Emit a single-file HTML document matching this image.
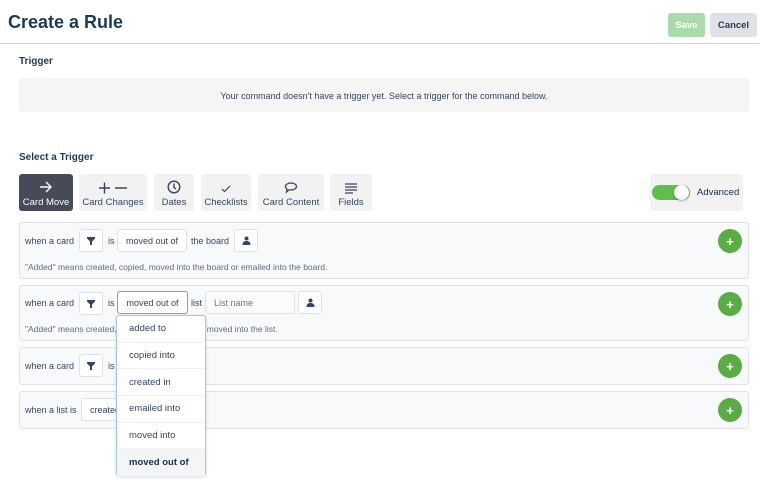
<!DOCTYPE html>
<html><head><meta charset="utf-8"><style>
*{box-sizing:border-box;margin:0;padding:0}
body{width:778px;height:484px;background:#fff;font-family:"Liberation Sans",sans-serif;color:#172b4d;position:relative;overflow:hidden}
.a{position:absolute}
h1{position:absolute;left:8px;top:12px;font-size:18px;font-weight:bold;color:#1d3a53}
.hr{left:0;top:43px;width:759px;height:1px;background:#d0d2d4}
.btn{top:13px;height:24px;border-radius:3px;font-size:9.5px;font-weight:bold;display:flex;align-items:center;justify-content:center}
.lbl{font-size:10px;font-weight:bold;color:#1d3a53}
.gbox{background:#f5f5f5;border-radius:3px}
.tab{top:174px;height:37px;background:#f2f2f2;border-radius:3px;font-size:9.5px;color:#344563;text-align:center}
.tab .ic{height:20px;display:flex;align-items:flex-end;justify-content:center}
.tab .t{margin-top:3px}
.row{left:19px;width:730px;background:#f8f9fa;border:1px solid #dfe1e6;border-radius:3px}
.tx{font-size:9px;color:#344563}
.f{position:absolute;height:23px;border:1px solid #dfe1e6;background:#fff;border-radius:3px;font-size:9px;color:#344563;display:flex;align-items:center;justify-content:center}
.plus{position:absolute;left:718px;width:24px;height:24px;border-radius:50%;background:#5aac44;color:#fff;font-weight:bold;font-size:13px;display:flex;align-items:center;justify-content:center}
.dd{left:116px;top:315px;width:90px;height:161px;background:#fff;border:1px solid #9ecbd8;border-radius:3px;box-shadow:0 1px 3px rgba(0,0,0,.15)}
.dd div{height:26.7px;border-bottom:1px solid #f0f0f0;font-size:9.5px;color:#344563;padding-left:12px;display:flex;align-items:center}
</style></head><body>
<h1>Create a Rule</h1>
<div class="a btn" style="left:668px;width:37px;background:#a9dbad;color:#fff">Save</div>
<div class="a btn" style="left:710px;width:47px;background:#dfe1e6;color:#1d3a53">Cancel</div>
<div class="a hr"></div>
<div class="a lbl" style="left:19px;top:56px">Trigger</div>
<div class="a gbox" style="left:19px;top:78px;width:730px;height:34px"></div>
<div class="a tx" style="left:19px;top:91px;width:730px;text-align:center">Your command doesn't have a trigger yet. Select a trigger for the command below.</div>
<div class="a lbl" style="left:19px;top:152px">Select a Trigger</div>

<div class="a tab" style="left:19px;width:54px;background:#464a59;color:#fff"><div class="ic"><svg width="14" height="14" viewBox="0 0 14 14" fill="none" stroke="#fff" stroke-width="1.4"><path d="M1 7h11M7 2l5 5-5 5"/></svg></div><div class="t">Card Move</div></div>
<div class="a tab" style="left:79px;width:68px"><div class="ic"><svg width="30" height="14" viewBox="0 0 30 14" fill="none" stroke="#344563" stroke-width="1.4"><path d="M1 8h11M6.5 2.5v11M17 8h12"/></svg></div><div class="t">Card Changes</div></div>
<div class="a tab" style="left:154px;width:40px"><div class="ic"><svg width="14" height="14" viewBox="0 0 14 14" fill="none" stroke="#344563" stroke-width="1.4"><circle cx="7" cy="7" r="5.8"/><path d="M7 3.5V7.5l2 1.5"/></svg></div><div class="t">Dates</div></div>
<div class="a tab" style="left:201px;width:50px"><div class="ic"><svg width="12" height="10" viewBox="0 0 12 10" fill="none" stroke="#344563" stroke-width="1.2"><path d="M2 5l2.5 2.5L10 2"/></svg></div><div class="t">Checklists</div></div>
<div class="a tab" style="left:258px;width:66px"><div class="ic"><svg width="14" height="13" viewBox="0 0 14 13" fill="none" stroke="#344563" stroke-width="1.3"><path d="M7 2c3 0 5.5 1.5 5.5 3.5S10 9 7 9c-.7 0-1.3 0-2-.2L2.5 11l.5-3C2 7.3 1.5 6.4 1.5 5.5 1.5 3.5 4 2 7 2z"/></svg></div><div class="t">Card Content</div></div>
<div class="a tab" style="left:330px;width:42px"><div class="ic"><svg width="12" height="12" viewBox="0 0 12 12" stroke="#344563" stroke-width="1.3"><path d="M0 2h12M0 5h12M0 8h12M0 11h8"/></svg></div><div class="t">Fields</div></div>

<div class="a" style="left:650px;top:174px;width:93px;height:37px;background:#f2f2f2;border-radius:3px"></div>
<div class="a" style="left:652px;top:185px;width:38px;height:15px;border-radius:8px;background:#61bd4f"></div>
<div class="a" style="left:674px;top:185px;width:15px;height:15px;border-radius:50%;background:#fff;box-shadow:0 1px 2px rgba(0,0,0,.3)"></div>
<div class="a" style="left:697px;top:187px;font-size:9.5px;color:#172b4d">Advanced</div>

<!-- row1 -->
<div class="a row" style="top:222px;height:57px"></div>
<div class="a tx" style="left:25px;top:236px">when a card</div>
<div class="f" style="left:79px;top:229px;width:24px"><svg width="8" height="8" viewBox="0 0 8 8" fill="#344563"><path d="M0 0h8v1.5L5 4.5V8H3V4.5L0 1.5z"/></svg></div>
<div class="a tx" style="left:108px;top:236px">is</div>
<div class="f" style="left:117px;top:229px;width:70px">moved out of</div>
<div class="a tx" style="left:191px;top:236px">the board</div>
<div class="f" style="left:234px;top:229px;width:24px"><svg width="9" height="9" viewBox="0 0 9 9" fill="#344563"><circle cx="4.5" cy="2.5" r="2"/><path d="M0.5 9c0-3 1.5-4 4-4s4 1 4 4z"/></svg></div>
<div class="a tx" style="left:25px;top:262px;font-size:8.5px;color:#5e6c84">"Added" means created, copied, moved into the board or emailed into the board.</div>
<div class="plus" style="top:229px">+</div>

<!-- row2 -->
<div class="a row" style="top:285px;height:56px"></div>
<div class="a tx" style="left:25px;top:298px">when a card</div>
<div class="f" style="left:79px;top:292px;width:24px"><svg width="8" height="8" viewBox="0 0 8 8" fill="#344563"><path d="M0 0h8v1.5L5 4.5V8H3V4.5L0 1.5z"/></svg></div>
<div class="a tx" style="left:108px;top:298px">is</div>
<div class="f" style="left:117px;top:291px;width:71px;border-color:#8aa0b0">moved out of</div>
<div class="a tx" style="left:191px;top:298px">list</div>
<div class="f" style="left:205px;top:291px;width:90px;justify-content:flex-start;padding-left:8px;color:#6b778c;background:#fafbfc">List name</div>
<div class="f" style="left:298px;top:291px;width:24px"><svg width="9" height="9" viewBox="0 0 9 9" fill="#344563"><circle cx="4.5" cy="2.5" r="2"/><path d="M0.5 9c0-3 1.5-4 4-4s4 1 4 4z"/></svg></div>
<div class="a tx" style="left:25px;top:324px;font-size:8.5px;color:#5e6c84">"Added" means created, copied, emailed into or moved into the list.</div>
<div class="plus" style="top:292px">+</div>

<!-- row3 -->
<div class="a row" style="top:347px;height:38px"></div>
<div class="a tx" style="left:25px;top:361px">when a card</div>
<div class="f" style="left:79px;top:354px;width:24px"><svg width="8" height="8" viewBox="0 0 8 8" fill="#344563"><path d="M0 0h8v1.5L5 4.5V8H3V4.5L0 1.5z"/></svg></div>
<div class="a tx" style="left:108px;top:361px">is</div>
<div class="plus" style="top:354px">+</div>

<!-- row4 -->
<div class="a row" style="top:391px;height:38px"></div>
<div class="a tx" style="left:25px;top:405px">when a list is</div>
<div class="f" style="left:81px;top:398px;width:50px;justify-content:flex-start;padding-left:8px">created</div>
<div class="plus" style="top:398px">+</div>

<div class="a dd">
<div>added to</div><div>copied into</div><div>created in</div><div>emailed into</div><div>moved into</div><div style="background:#f4f5f7;font-weight:bold;color:#172b4d;border:0">moved out of</div>
</div>
</body></html>
